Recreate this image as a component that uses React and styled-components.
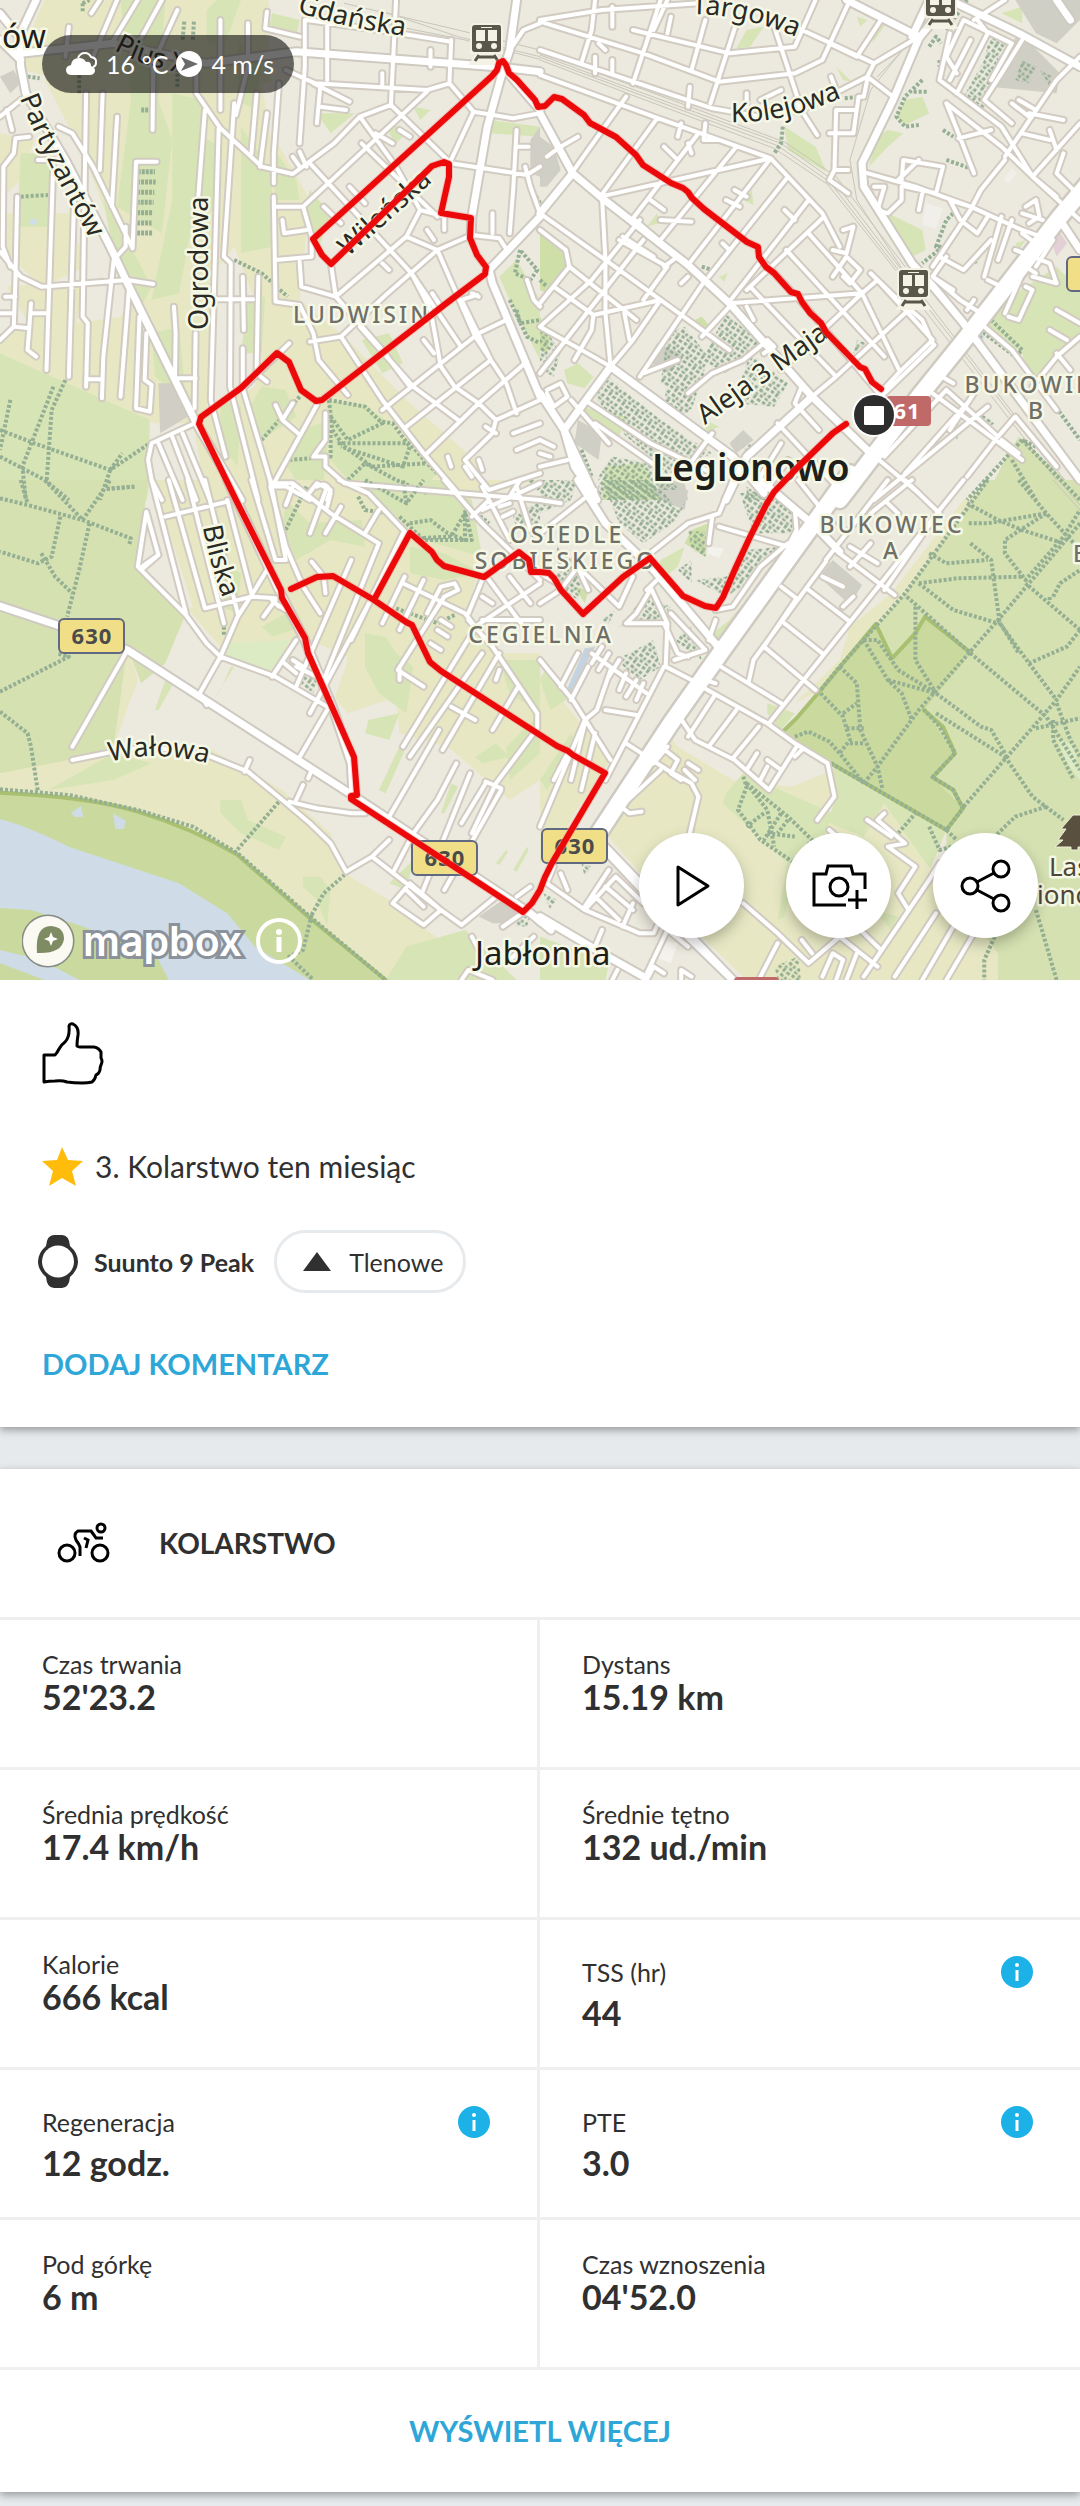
import React from 'react'
import styled, { createGlobalStyle } from 'styled-components'

const colors = {
  text: '#303030',
  link: '#2ea7d8',
  info: '#1cb2e8',
  line: '#efefef',
  page: '#e6eaed',
}

// Map tiles. Every tile keeps its own drawing units, placed by x and y.
const tiles = [
  {
    x: 0,
    y: 0,
    areas: [
      ['#e7e8c3', 'M60 300L250 0H780L790 400L900 600L870 900L1000 1010L1180 1200L1400 1400L1300 1500H600L560 1270L450 1270L0 1060V400Z'],
      ['#ece9de', 'M0 0H250L130 240L250 480L400 900L350 950L0 1000V600L60 540L100 420L0 400ZM620 820L680 740L740 900L760 1080L740 1160L600 1230ZM760 250L900 240L870 420L790 440Z'],
      ['#e7e8c3', 'M130 0H250L150 230L60 210L90 90ZM0 640H200L250 800L120 860L0 740ZM20 860L240 840L220 1000L100 1000Z'],
      ['#d7e4b5', 'M350 0H480L460 300L500 420L470 700L340 620L380 300ZM500 280L590 300L570 600L520 880L440 900L500 600ZM60 460H150V680H50ZM700 380L790 520L790 740L700 760ZM720 890H770L760 1060H700ZM0 1060L435 1260L430 1500H0ZM760 1160L830 1170L860 1250L760 1320L720 1230ZM950 1200L1060 1215L1120 1260L1270 1420L1200 1500H1060L960 1380ZM600 30L630 0H700L650 140L600 130ZM790 40L870 60L860 110L780 90ZM900 570L960 640L920 760L880 640ZM1050 1020L1130 1000L1170 1090L1110 1120ZM1140 370L1180 400L1150 430L1130 400ZM1200 320L1250 330L1220 360ZM920 340L1030 340L960 400ZM440 1000L520 980L540 1200L450 1130ZM870 1290L960 1260L940 1440L880 1480L830 1390ZM1450 830L1500 780L1568 900V1080L1480 900ZM1420 360L1568 380V410L1420 400ZM570 400L640 440L620 640L580 600ZM300 600L380 740L440 860L400 940L330 760ZM690 120L760 180L740 330L690 300ZM640 1200L700 1220L690 1400L640 1330ZM790 440L860 540L870 600L800 600Z'],
      ['#d0cec5', 'M460 1150H505L545 1250L465 1300ZM0 230L40 210L60 250L30 280ZM1568 380L1540 420V520L1568 530Z'],
      ['#cfdfec', 'M85 660L105 655L108 672L90 676Z'],
    ],
    rails: ['M1100 30L1330 110L1568 170', 'M1110 70L1350 120L1568 178', 'M1000 10L1330 90L1568 150'],
    minor: [
      'M155 480L135 1110M215 600L200 1130M250 280L240 950L255 970L250 1160M250 1138H298M298 280L290 510M340 350L325 620',
      'M330 780L300 1070L296 1195M375 860L350 1190M405 950L395 1225L435 1235L440 1155L420 1140L425 1000M445 200L443 390',
      'M505 920L510 1000L508 1135H568M595 330L575 600M568 1000L565 1225M640 60V330M635 385L612 1200L655 1370',
      'M680 310L650 770L670 790L668 1160L750 1500M720 70V200L685 345M745 280L730 460M775 340L755 500M705 830L708 990M750 830L745 1120L775 1145',
      'M620 898H735M705 1045V1165L790 1460M795 590L800 905L870 915L910 1000L925 1080L1010 1185M795 550V460L810 250',
      'M570 220V280L640 385L760 500L850 522L970 430L1045 350L1135 315L1150 0M885 60V200L870 430M775 35L770 85L870 110',
      'M830 210L915 250L1240 270L1305 250L1310 120M890 60L1100 90L1310 125M1305 250L1375 335L1490 355L1568 340M1375 335L1305 490',
      'M1240 275L880 620H795M900 490L1195 820L1335 1035M1050 430L1270 650M1045 350L1150 500L1220 630L1290 650L1290 690M1135 315L1310 490L1530 525L1568 500',
      'M880 620L905 710L905 770L800 780M870 785L875 860L975 890L1180 710L1220 630M962 800L975 890L1110 1050L1190 1160M1180 710L1270 750L1370 705L1450 715L1475 755',
      'M1270 750L1380 1010L1470 1150L1500 1240M900 1025L990 1010L1120 885L1270 750M990 1010L1110 1200L1230 1360L1330 1480M1045 980L1200 1160L1330 1260',
      'M1110 1230L1390 1000L1470 960M1180 1280L1425 1080L1340 900L1385 885M1240 1360L1390 1210L1530 1085M1390 1210L1440 1260L1568 1200M1440 1260L1430 1300L1350 1380L1420 1470L1568 1420M1195 820L1250 930L1280 1100L1320 1160L1390 1210',
      'M910 250L1015 305M930 260L920 370M930 320L1005 330M1110 220V260M850 470L870 500M870 455L890 500M940 620L990 670M1015 560L1060 610M1090 400L1140 430M1160 390L1190 410M950 240V70M1250 150V200M1045 350L1080 400M820 660L825 700L890 690',
      'M170 380L210 400L270 500L385 745L395 485H455M0 755L60 830L120 860L370 840L445 852M85 410L45 415L40 460L10 500L8 740L30 800M50 590L45 830L40 980L85 985L90 910M90 940H140M0 940H40M15 890H45M40 980L0 1020M85 985L80 1050L105 1070',
      'M340 0L270 170M400 0L330 120M470 0L380 170M515 30L440 200M200 80L190 170M290 0L265 40M0 350L60 300M20 330L35 390M110 480H155M330 780L365 740V680',
      'M565 1270L440 1330L430 1380L440 1440L470 1500M460 1330L530 1500M500 1310L570 1500M530 1300L610 1500M800 1215L820 1260L865 1300M820 1260L850 1210M945 1240V1320L910 1370H945V1400L1000 1450L1568 1500M920 1215L790 1460M790 1460H830L900 1500M890 1490L920 1450L960 1470L950 1500',
      'M705 1165L840 1030M1255 880L1280 920M1370 880L1390 890M1230 1020L1260 1060M1500 390L1490 570L1480 700M1500 440H1535M1430 700V640M1480 150L1520 90L1568 70M1410 1280L1440 1300M1300 1370L1310 1400M1350 1400L1370 1430M1390 1380L1400 1410M1490 1300L1568 1270M1500 1350L1568 1320',
      'M1568 640L1540 560L1525 500M1530 840L1550 900L1568 920M1110 790L1130 810M1240 690L1260 720',
    ],
    major: [
      'M105 0L55 110L60 200L75 280L190 480L320 740L370 850L570 1270L700 1500M0 40L55 110M0 120L60 180',
      'M60 160L330 130L600 190L860 155L1440 200L1568 215M1500 0L1480 150L1455 230L1415 380L1385 560L1370 650L1368 710',
      'M1568 650L1420 810L1430 850L1568 1190M1460 200L1568 330',
    ],
    paths: [
      'M0 1290L100 1330L320 1410L435 1330M30 1200L0 1350M155 1160L65 1400L75 1500M190 1140L150 1230L135 1450M320 1410L355 1360M320 1410L290 1500M310 1467L390 1460M0 1370L130 1440L200 1500',
      'M955 1200L965 1290L1000 1340L1080 1400L1240 1390M955 1200L1060 1220L1110 1270L1010 1320L960 1250M980 1330L1190 1330L1240 1390L1270 1420M1110 1265L1140 1270L1190 1340L1170 1400L1080 1370L990 1340M840 1380L960 1370V1290M1010 1440L1060 1390L1150 1440L1240 1480M680 780L760 820L835 890M870 1190L760 1320',
      'M1510 750L1495 820L1540 840L1560 810L1510 750M1480 900L1530 1010L1568 1030M1500 930L1510 970L1568 960M60 590L140 585M240 10L260 0M240 10L240 40M535 65L530 120M563 65L560 120M80 230L115 235M230 280V220M515 260V200M1535 550L1568 610M1540 1440L1568 1470',
    ],
    hedges: 'M400 515H450M398 546H452M398 577H448M397 607H446M398 638H442M398 669H440M398 699H442M410 330H442',
    thickets: '',
  },
  {
    x: 540,
    y: 0,
    areas: [
      ['#d7e4b5', 'M710 380L800 440L832 515L720 450ZM1060 300L1110 290L1130 340L1060 375L1035 350ZM1010 390L1055 400L1010 440L955 500L980 410ZM1010 640L1110 690L1120 750L1080 770L1020 710ZM1310 930L1500 800L1568 870V1000L1420 1150L1400 1060L1290 970ZM600 90L650 80L610 140L570 145ZM860 200L905 245L880 240ZM920 50L950 60L930 80ZM980 60L1005 70L965 130ZM590 600L615 570L620 615ZM310 680L340 640L345 670ZM520 830L545 820L535 845ZM70 1110L110 1090L155 1130L130 1165L80 1150ZM480 1260L520 1280L480 1300ZM1340 40L1400 20L1400 70ZM1380 730L1410 720L1390 750ZM120 1220L250 1250L230 1310L150 1280ZM190 1400L300 1390L350 1500H180Z'],
      ['#cedfa8', 'M0 690L70 750L75 800L20 880L0 870ZM450 960L470 950L490 975L460 990ZM0 950L30 1010L20 1060L0 1050Z'],
      ['#d5e1b1', 'M1390 1310L1568 1480V1500H1290L1350 1380Z'],
      ['#d0cfc5', 'M1390 95L1510 220L1500 280L1310 260L1350 170ZM1380 0H1568V60L1500 130L1440 100ZM0 410L40 440L60 510L20 560L0 560ZM310 1080L340 1030L410 1060L370 1120ZM110 1260L180 1300L170 1380L100 1330ZM550 1330L590 1290L620 1320L570 1360ZM330 1430L420 1450L430 1500H360Z'],
      ['#f1efea', 'M1120 610L1170 625L1150 685L1110 675ZM1345 540L1370 505L1385 520L1360 550Z'],
      ['#e3cfd6', 'M1480 710L1505 690L1530 730L1500 770Z'],
      ['#cfdfec', 'M1262 1010L1285 990L1290 1020L1265 1025Z'],
    ],
    rails: [
      'M0 165L300 280L700 430L850 540L1050 810',
      'M0 172L300 288L690 437L842 547L1040 810',
      'M0 180L290 294L680 445L835 553L1032 810',
      'M1060 140L960 270L900 480L920 600L1060 820L1568 1500',
      'M1110 90L980 230M1120 915L1560 1500M1105 915L1545 1500M0 158L310 272L710 426L860 530L1060 800',
    ],
    minor: [
      'M0 225L330 350L670 475L820 640L870 740M250 290L95 515M340 355L175 590M460 400L270 655M570 440L350 720M670 475L430 795M720 530L490 830M780 600L550 905M820 655L600 870',
      'M670 475L175 590M550 910L935 880L980 840L1140 1020L1045 1115L1000 1165M780 700L935 880L1045 1115M715 750L1000 1070M610 860L860 1130L790 1190M1070 930L860 1130M935 880L700 1110M1145 1035L950 1230M645 780L780 930L1000 1200M550 905L640 1010',
      'M0 65L300 160L520 245L740 220L820 180L900 0M180 30L0 60M350 0L270 250M480 60L440 210M570 70L495 310M680 80L750 300M270 90L550 160L740 140L800 0M0 150L500 325L640 350M160 0L150 90L120 190M330 90L370 0M180 30L460 10',
      'M950 230L1025 290L970 410M950 230L970 190L740 80M640 350L760 330L950 230M1100 110L970 190M840 130L920 170L990 60M950 240L940 290L925 290L910 400L840 400M920 330H860L855 510L840 540L895 580M860 510H895M740 300L805 405',
      'M935 515L1090 560L1250 620L1400 690L1480 720M1180 310L1215 400L1260 520M1190 100L1160 240L1340 380L1430 530L1500 590M1210 280L1300 100L1270 60M1350 480L1280 570L1250 630L1140 800M1400 120L1340 220L1290 300L1370 370M1350 470L1500 240L1568 170M1180 310L1340 440L1430 530L1568 370',
      'M1050 540L1055 480L1170 500L1150 580L1060 560M1040 540L1100 480M970 560L1000 560L980 630L1010 640L1050 600V560M1100 630L1110 580M1210 220L1180 170L1230 60L1370 130L1310 240M1260 60L1350 0M1190 240L1250 120M1215 415L1310 390M1480 390L1500 450M1400 400L1480 420M1420 340L1520 360M1430 530L1568 660M1500 520L1568 590M1520 460L1500 520M1390 300L1440 330M1370 310L1420 350',
      'M0 690L75 750L85 800L280 960M0 640L190 780L350 900L550 1050M350 900L155 945L40 860M300 720L90 1000L0 1120M0 980L155 1070L205 1100M155 945L150 990L100 1080M190 780V940L205 1100M180 590L190 780M550 920L470 1010M350 900L270 1020L205 1100M230 720L370 800L300 900M245 940L260 1020M290 660L150 840L0 980M85 800L0 910M270 655L400 770L360 800M480 840L290 1130M650 1030L590 1080L500 1120L430 1180M130 1200L320 1330L500 1420M160 1270L340 1400M200 1330L90 1200',
      'M320 600L360 630M360 440L400 480M410 370L400 410M480 370L475 420H515M430 430L440 460M540 600L580 620M565 570L600 590M710 630L740 660M350 660L440 665M240 710L330 770M110 410L60 440L20 470M410 850L430 830M380 50L370 100M210 20V80M160 170V220M210 180V220M435 260L430 320M600 280V320M640 300L700 270M845 230L860 270M170 130L190 150M530 730L550 750M620 960L600 920M300 1120L400 1080M500 1300L430 1400M640 1430L700 1330M690 1270L870 1470M650 1480L720 1380M760 1160L740 1210L810 1290',
      'M1250 620L1190 600L1220 660L1270 700M1270 700L1300 650M1160 770L1230 810L1310 720M1140 830L1200 870M1180 770L1140 830L1220 900L1280 940M1350 940L1410 800L1440 820M1360 950L1390 960L1430 870L1410 860M1380 750L1480 790L1500 850L1430 830M1340 650L1290 830M1370 660L1330 780M1410 620L1440 600L1450 650L1420 670M1400 700L1440 730M1460 660L1400 640M1260 900L1240 930M1300 840L1340 860M1490 720L1440 800M1500 930L1568 970M1480 990L1530 1020M1568 1010L1500 1070L1430 1160M1150 1120L1200 1150M1290 980L1370 1050L1500 1230M1500 1060L1540 1110M1180 1170L1330 1310L1240 1430M1260 1180L1190 1290M1140 1180L1400 1380M1330 1310L1380 1250L1500 1400M1340 1320L1390 1360M1300 1220L970 1500M950 1350L1100 1480M1240 1210L1060 1420M1180 1170L1000 1370',
      'M0 1400L80 1380M0 1320L40 1340M0 1360L30 1370M20 1170L60 1150L80 1190L40 1220L20 1180M880 690L910 680L890 760L850 750M850 830L890 770L930 810L900 850L880 830M660 1020L680 1040L650 1060M960 820L1030 890L1110 960L1140 1030',
    ],
    major: [
      'M0 340L95 520L175 590L430 795L550 910L790 1190L950 1350L980 1370M890 0L1100 110M1190 0L1100 115L1025 300L935 490L940 560L1080 790L1150 870L1230 970L1568 1440',
      'M1190 0L1400 105L1568 200M1130 0L1080 110M95 520L0 640M205 1100L70 1290L165 1500M205 1100L560 1370L650 1480M0 1180L70 1290L100 1400L165 1500M790 1190L600 1370L540 1500M1510 660L1568 750M1500 0L1540 60',
    ],
    highway: 'M1600 540L1510 650L1240 1010L1100 1190L870 1500',
    paths: [
      'M1110 240L1060 290L1035 350L1060 380L1100 375M1085 275H1125M885 295L925 290M705 380L700 430L680 460M1180 480L1250 505M1210 630L1180 660L1150 740L1170 740L1110 790M1170 390L1200 410M1130 140L1150 110L1165 130M1100 80H1120M1160 180V200M1310 960L1400 1050L1380 1070L1290 1000L1250 1030M1380 1070L1440 1140L1568 1320M1240 0L1180 90',
      'M1400 1320L1240 1500M1400 1320L1568 1500M1370 1380L1440 1500M1440 1340L1400 1320M470 800L500 810M320 880L350 900M0 840L20 860M120 1350L150 1430',
    ],
    thickets: 'M540 940L640 1030L540 1120L470 1080ZM370 1000L420 980L490 1070L440 1230L350 1150ZM200 1130L350 1260L500 1360L380 1420L250 1310L160 1190ZM610 1060L720 1150L680 1220L560 1210ZM170 1430L210 1370L360 1400L420 1500H170ZM1310 90L1370 130L1290 330L1230 290L1290 180ZM0 960L60 1060L40 1130L0 1110ZM1400 180L1440 200L1420 250L1380 240ZM1450 210L1490 230L1480 260ZM370 1100L480 1120L430 1240L360 1240ZM1250 780L1280 770L1270 800ZM1280 1240L1320 1270L1290 1290ZM1190 1290L1230 1260L1210 1320ZM920 1020L950 1030L910 1060ZM590 1340L620 1330L600 1370ZM600 1460L660 1500H600Z',
  },
  {
    x: 0,
    y: 480,
    areas: [
      ['#e7e8c3', 'M440 0H1568V900L1480 960L1300 800L1160 760L1150 650L1010 700L960 640L1010 530L900 480L860 480L790 590L640 500L540 380ZM0 870L200 840L520 820L600 800L820 930L960 1060L1000 1180L1130 1260L1300 1400L1500 1500H1100L680 1120L400 1000L0 940ZM370 480L400 600L330 800L220 830L340 560Z'],
      ['#ece9de', 'M440 0L480 120L560 380L520 390L400 260L420 80ZM540 400L640 530L960 680L880 480L1010 540L960 690L1030 840L1040 950L580 640L480 550ZM410 610L480 550L1030 950L1130 1250L1010 1180L960 1060L820 930L600 800L400 760ZM1350 60L1568 0V520L1450 520L1350 400L1400 250L1380 200Z'],
      ['#d5e1b1', 'M0 0H430L400 260L540 400L480 550L410 610L370 500L330 800L200 840L0 880Z'],
      ['#d7e4b5', 'M830 60L900 130L1050 120L1060 200L960 180L860 240L820 140ZM1190 200L1290 220L1400 280L1290 300L1190 280ZM1050 0H1300L1370 60L1400 230L1230 180L1120 80ZM640 630L670 560L680 560L620 660ZM460 690L510 600L480 600L450 690ZM620 240L700 280L690 400L640 380ZM1060 460L1120 470L1150 520L1200 560L1180 700L1100 640L1060 560ZM1070 720L1160 700L1130 780L1060 760ZM1470 800L1568 700V820L1480 900ZM1100 930L1160 800L1180 800L1120 940ZM640 960L700 960L720 1020L830 1070L810 1110L700 1060L640 1000ZM880 1190L930 1190L960 1230L950 1340L920 1260L880 1220ZM140 930L330 820L440 850L330 900ZM1450 540L1568 540V700L1480 640ZM1280 1000L1310 910L1330 920L1290 1000ZM1380 830L1440 790L1480 830L1400 850ZM1180 1400L1350 1350L1500 1500H1120ZM1130 1210L1200 1140L1180 1230ZM760 440L830 400L850 450L790 470ZM1440 1150L1470 1110L1475 1115L1450 1155ZM1490 1170L1530 1100L1535 1110L1500 1175Z'],
      ['#dcebc4', 'M660 490L840 480L800 590L640 530Z'],
      ['#cad99d', 'M0 940Q260 950 400 990Q560 1040 690 1120L900 1310L1120 1500H0Z'],
      ['#cfdbe6', 'M0 1018Q60 1030 200 1100L520 1210L660 1300L740 1400L900 1500H490L440 1400L340 1380L240 1340L90 1290L0 1284ZM205 1000L235 978L242 1010L220 1012ZM328 1000L365 1022L360 1046L335 1048ZM0 1410L120 1440L230 1500H130L0 1450Z'],
      ['#d0cec5', 'M1390 1310L1460 1260L1510 1290L1480 1330L1430 1330Z'],
    ],
    rails: [],
    minor: [
      'M210 840L330 815L430 800L600 825L720 875L820 960L900 1030L960 1090L1005 1175L1080 1130L1280 1290L1340 1335L1440 1250M840 965L920 985L1020 1000L1060 1000M365 520L210 800M725 840L710 875M880 915L860 960M905 870L895 895M1080 1130L1130 1080',
      'M400 260L425 95L460 225L405 265L540 405L600 490L640 530L800 590L950 680M410 270L460 225M640 530L580 640L600 675M640 530L690 410L740 330L775 270M950 690L865 840M440 0L540 400M480 110L660 65M490 0L595 385L730 350L800 355M545 0L650 430M595 0L690 400M660 60L730 340',
      'M730 0L800 240H830L785 0M785 20L830 200L880 320L930 400M860 480L790 590M1020 240L860 620M1170 160L1020 480M1100 190L940 600L860 560M1180 160L900 700M785 10H850L960 100L1100 190M850 20L830 75M950 20L900 160M920 20Q950 0 960 40L950 80M990 80L945 160M1100 90L1060 160M905 245L940 290L945 340',
      'M985 0L1070 40L1180 160M1290 0L1400 130L1500 230L1568 300M1370 460L1170 800M1400 520L1190 830M1450 520L1285 810M1360 420L1430 500L1560 700V745L1440 910M1275 750L1130 1010M1325 850L1270 960L1200 1060L1145 1170M1365 880L1225 1240M1410 910L1340 1030M1455 930L1290 1230M1410 905L1455 925M1440 910L1370 1060',
      'M1505 620L1430 750M1310 680L1380 720M1175 290L1110 430M1230 300L1160 450M1170 310L1350 400L1380 440L1568 310M1230 620L1155 570L1290 350L1330 330L1320 310L1280 320L1240 400M1400 300L1360 400M1400 350L1430 370M1420 300L1520 440M1480 290L1540 370M1140 1270L1190 1210L1280 1290L1230 1335L1140 1270M1180 1230L1230 1280M1280 420L1310 440M1270 450L1300 470M1250 490L1280 510M1450 570L1440 600M1400 90L1568 10M1400 20L1480 180M1450 80L1480 70M1460 110L1490 95M1400 420L1568 420M1500 20L1540 150',
      'M1510 0L1480 50M1370 110L1420 60M1160 600V560M1340 1500L1360 1470L1430 1500M1370 1370L1390 1410M1460 1340L1530 1290L1568 1330M800 360L765 410M800 370L830 390M790 360L810 380M1500 1250L1540 1220M1550 1370L1480 1440M820 545L860 580M850 540L880 560M810 560L790 590',
    ],
    major: [
      'M0 378L165 435L370 510L580 650L1030 950L1540 1300L1600 1350',
      'M660 0L810 330L885 480L965 680L1020 850L1025 945',
    ],
    paths: [
      'M0 55L80 75L240 120L380 175L375 195M60 0L80 70M130 0L240 120L320 0M310 27L390 20M260 130L230 270L195 410M175 110L150 230L110 250L0 215M120 220L160 290L210 340M0 635L200 530L165 520M0 695L80 760L90 800L110 935M680 1120L810 965M905 1305L940 1240L1000 1185M905 1305L880 1410L840 1430L910 1500M1150 385L1270 430L1320 405M650 440V470',
      'M0 928L200 945L400 990L560 1040L690 1120L900 1310L1120 1500M1060 0L1180 70L1230 0M1180 70L1170 0M1190 130L1250 120L1300 160L1350 180V100L1310 170L1200 175M1040 50L1060 90L1130 100M1370 90L1420 130M890 20L820 170M1160 110L1230 180L1370 180L1350 90',
    ],
    border: 'M0 938Q260 950 400 995Q560 1045 690 1125L900 1315L1120 1500',
    thickets: 'M880 560L920 600L910 640L870 610ZM1490 110L1568 60V180L1500 150ZM1490 1310L1540 1310L1530 1340L1500 1340Z',
  },
  {
    x: 540,
    y: 480,
    areas: [
      ['#d7e4b5', 'M550 420L700 240L600 420L520 490L490 470ZM660 670L740 700L700 750L660 700ZM350 240L420 200L400 260L340 310ZM850 850L1180 1050L1120 1200L920 1060L830 1040L860 950Z'],
      ['#e7e8c3', 'M0 580L205 840L100 1000L50 1100L0 1150ZM370 760L400 800L560 900L730 920L850 870L860 960L820 1020L940 1070L1000 970L1120 1150L1180 1210L1330 1420V1500H600L350 1250L190 1060L250 930L300 880ZM1230 60L1330 0L1060 340L815 630L740 670L870 540L900 440L1020 340Z'],
      ['#d7e4b5', 'M590 880L850 1000L800 1150L720 1150L530 970L540 940ZM0 600L20 560L90 650L30 690ZM690 1320L720 1140L740 1160L710 1310ZM0 1370L200 1450L190 1500H0ZM970 1290L1040 1310L1020 1350ZM0 900L90 760L110 790L20 930Z'],
      ['#d5e1b1', 'M1300 0H1568V1500H1330V1420L1180 1210L1180 1050L815 630L1060 340Z'],
      ['#cad99d', 'M975 432L1022 535L1118 410L1250 518L1115 690L1205 820L1140 892L1228 985L1180 1050L845 850L705 755L815 630Z'],
      ['#cedfa8', 'M440 150L490 130L480 230L420 190ZM100 320L140 330L130 370Z'],
      ['#d0cfc5', 'M810 290L850 240L935 315L900 375ZM330 30L430 30L420 90L350 60Z'],
      ['#c4d3df', 'M130 505L160 500L90 640L75 635Z'],
      ['#f4f2ed', 'M490 200L535 205L520 235L485 220ZM340 1380L400 1390L380 1450L330 1430Z'],
      ['#dcebc4', 'M1500 770L1550 800L1568 880V900L1530 850Z'],
    ],
    rails: ['M1490 0L1568 90', 'M1505 0L1568 75'],
    minor: [
      'M1230 0L990 310L665 730M1060 0L1160 100M960 100L1080 0M830 240L1010 0M830 245L620 540L605 610M700 320L745 355L650 500L800 630M780 330L900 425M710 430L820 520M525 560L700 670M470 620L660 730L740 790L835 850L855 950L805 1020',
      'M405 710L450 780L565 840L665 930L745 800M505 650L430 770M570 690L490 800M635 740L560 835M250 790L370 870L440 910L460 950L435 1060M350 870L235 980L260 1000L295 995M870 220L1030 345M1160 90L1000 330M900 260L960 190M900 200L980 250M820 290L880 320M880 380L910 350',
      'M0 540L95 660L205 840M205 570L165 690L130 720L0 1040M360 560L190 900M365 560L440 600M320 320L370 430L365 560M500 110L490 190M560 0L520 100L430 130L320 220M520 140L720 200L745 150L740 90M510 390L560 380L640 260L720 190M190 690L280 705M130 730L90 900M160 760L120 930M0 370L60 330L110 260M0 280L50 310M250 430L360 430L400 520L430 530M320 330L280 400L250 430M110 260L230 380L270 290L250 270',
      'M150 520L310 640M180 500L150 550M200 520L170 570M230 540L200 590M250 580L230 630M280 600L250 650M300 610L280 660M110 520L60 620M140 560L90 660M390 540L480 510L380 400M350 800L400 840L380 880L410 900M370 800L330 850M430 850L460 870M420 870L450 900M600 870L630 820M640 900L660 860M660 840L700 870M740 830L760 810M1010 70L1040 100M160 30L0 160M0 60L60 70M140 330L100 240M350 290L310 330M520 490L490 480L510 420',
      'M20 1210L130 1290L290 1360H330L360 1290M130 1290L220 1190L300 1270M160 1250L230 1320M190 1220L270 1290M200 1170L130 1280M270 1270L240 1340M60 1180L80 1230M40 1160L20 1210M310 1480L370 1350L430 1400M180 1350L160 1400M590 1270L690 1360L780 1450L870 1370L980 1460M940 1490L1130 1200L1160 1150M1000 1000L980 1020L1060 1090L1010 1100L1090 1160L1040 1240L1070 1290M1150 1300L1030 1490M1200 1340L1110 1500M1260 1360L1180 1500',
      'M930 1350L990 1410M760 1380L790 1420M690 1390L640 1490M820 1490L850 1420L880 1440L860 1500M920 1420L890 1500M310 1500L330 1460L360 1480M410 1500V1470L440 1490M225 1470L210 1500M950 1020L1020 1070M840 1050L990 1180L960 1240M80 820L40 900M480 600L510 610M750 0L850 130',
    ],
    major: [
      'M110 0L190 130L330 270L525 510M640 0L800 140L870 215M0 1310L180 1420L300 1490M170 1080L560 1500',
      'M180 1100L390 1330L560 1500',
    ],
    highway: 'M900 -20L530 510L380 730L170 1060',
    paths: [
      'M1300 0L1060 340L870 560L815 630M1240 70L1330 120L1400 150L1520 190M1390 0L1470 100L1568 210M1470 100L1350 180V220L1410 300L1520 170L1568 90M1130 220L1180 250L1300 240M1100 310L1210 295L1400 290M1100 310L1200 390L1330 430M1250 190L1310 240L1335 430L1420 550L1500 660M1245 130H1300L1470 100',
      'M1568 130L1420 310L1330 420L1100 690L980 860L940 910M1065 350L1250 520L1470 710L1568 870M1090 380V540L1150 640M1568 450L1410 310M1568 450L1530 500L1420 550M940 480L1010 600L1050 640L1080 720M940 480H980L1040 570L1150 640L1280 740L1310 750L1350 820M1010 600L1150 640M1150 700L1350 830M870 560L920 610L930 750L980 860L995 930M815 640L880 710L900 780L870 820M880 700L920 670M890 745H940M900 790H940M740 770L780 755L840 785L870 820L940 910',
      'M845 850L1180 1050L1228 985L1200 930L1140 892L1205 820L1160 740L1115 690M1230 980L1500 660L1568 560M1350 830L1430 950L1520 1020M1470 980L1380 1010L1320 1070M1130 1040L1160 1110L1270 1080M1490 720V780L1550 900M1440 745L1568 715M1440 1290L1500 1500M1320 1370L1290 1440V1500M1040 1060L1090 1000M1180 1050L1210 1080M1500 670L1540 780L1568 830M1490 350L1510 310L1568 270M1480 360V350M1330 420L1390 520',
      'M590 890L600 920L575 990L640 1080L740 1150M600 910L720 1010L790 1080L740 1140M600 910L660 990L680 1100M650 1000L600 1040M700 1000L650 1080M660 1060L740 1070M720 1020L690 1060',
    ],
    border: 'M705 755L745 715L815 630L975 432L1022 535L1090 460L1118 410L1250 518M1115 690L1170 740L1205 820L1140 892L1200 930L1228 985L1180 1050L845 850',
    thickets: 'M180 0H330L400 90L420 70L400 120L300 190L230 130ZM430 150L490 160L480 230L440 210ZM580 40L680 30L740 100L730 160L620 160ZM600 210L700 200L600 310L540 350L450 300L540 290ZM220 540L330 480L350 560L290 600ZM230 440L300 350L380 380L340 430ZM390 480L440 440L470 540ZM50 200L130 280L110 360L50 320ZM0 0H110L90 60L0 100ZM400 270L440 240V310ZM180 420L220 390L200 430ZM680 1460L750 1430L760 1500H690ZM120 1150L150 1160L130 1190ZM10 1240L50 1260L30 1290Z',
  },
]

const route =
  'M881 389L872 382L865 369L860 367L826 332L821 323L810 313L802 302L798 294L791 292L774 273L766 267L759 257L758 247L747 242L704 209L692 198L688 192L683 188L671 183L643 165L636 155L616 137L590 123L584 115L562 99L554 97L545 106L538 107L535 100L517 80L509 73L506 65L503 61L499 63L497 70L492 76L313 239L322 255L331 264L432 166L444 162L449 164V177L441 213L471 218L470 238L477 255L486 267L485 274L448 302L322 400L316 401L301 390L298 383L289 362L277 353L241 388L201 417L199 424L236 500L281 590L282 598L305 638L308 653L332 707L354 757L357 795L351 796V799L523 912L532 903L540 890L545 877L552 863L605 773L573 755L568 751L557 746L540 735L441 671L430 662L412 625L406 622L374 600L333 576L317 577L291 589M375 598L410 533L432 552L437 560L444 566L484 577L519 552L529 560L531 572H540L549 573L554 578L561 590L583 614L623 577L650 558L683 596L705 606L716 608L723 597L736 567L750 537L766 505L774 492L798 467L833 433L846 424'

const streets = [
  { name: 'Gdańska', d: 'M297 12Q348 29 414 37' },
  { name: 'Targowa', d: 'M692 14Q745 14 808 42' },
  { name: 'Kolejowa', d: 'M731 122Q788 124 854 92' },
  { name: 'Partyzantów', d: 'M20 98Q42 157 110 274' },
  { name: 'Pius XI', d: 'M114 50Q160 76 230 76' },
  { name: 'Ogrodowa', d: 'M208 330V180' },
  { name: 'Wileńska', d: 'M348 257L450 166' },
  { name: 'Aleja 3 Maja', d: 'M705 425L860 315' },
  { name: 'Bliska', d: 'M203 527Q210 568 230 616' },
  { name: 'Wałowa', d: 'M110 762Q160 748 220 767' },
]

const districts = [
  { name: 'LUDWISIN', x: 362, y: 323 },
  { name: 'BUKOWIEC', x: 1037, y: 393 },
  { name: 'B', x: 1037, y: 419 },
  { name: 'OSIEDLE', x: 567, y: 543 },
  { name: 'SOBIESKIEGO', x: 566, y: 569 },
  { name: 'CEGIELNIA', x: 541, y: 643 },
  { name: 'BUKOWIEC', x: 892, y: 533 },
  { name: 'A', x: 892, y: 559 },
  { name: 'B', x: 1082, y: 562 },
]

const towns = [
  { name: 'ów', x: 2, y: 48, size: 32 },
  { name: 'Jabłonna', x: 475, y: 965, size: 33 },
]

const shields = [
  { x: 58, y: 618 },
  { x: 411, y: 840 },
  { x: 541, y: 828 },
  { x: 1066, y: 256 },
]

const stations = [
  { x: 472, y: 25 },
  { x: 926, y: -11 },
  { x: 899, y: 270 },
]

const stats = [
  { label: 'Czas trwania', value: "52'23.2" },
  { label: 'Dystans', value: '15.19 km' },
  { label: 'Średnia prędkość', value: '17.4 km/h' },
  { label: 'Średnie tętno', value: '132 ud./min' },
  { label: 'Kalorie', value: '666 kcal' },
  { label: 'TSS (hr)', value: '44', info: true },
  { label: 'Regeneracja', value: '12 godz.', info: true },
  { label: 'PTE', value: '3.0', info: true },
  { label: 'Pod górkę', value: '6 m' },
  { label: 'Czas wznoszenia', value: "04'52.0" },
]

const Tile = ({ tile, children }) => (
  <g transform={`translate(${tile.x} ${tile.y}) scale(0.3444 0.3333)`}>{children}</g>
)

const joined = (list) => list.join('')

function RouteMap() {
  return (
    <MapCanvas viewBox="0 0 1080 980" role="img" aria-label="Mapa trasy">
      <defs>
        <pattern id="thicket" width="48" height="42" patternUnits="userSpaceOnUse" patternTransform="rotate(38)">
          <path d="M2 3h11v9h-9zM19 1h9v12h-8zM34 5h11v8h-12zM5 19h9v10h-10zM22 18l11 2v9h-11zM38 21h8v9h-8zM1 33h12v7h-10zM18 35h9v6h-9zM32 33h11v8h-9z" fill="#94af93" />
        </pattern>
      </defs>
      <rect width="1080" height="980" fill="#ece9de" />
      {tiles.map((tile, i) => (
        <Tile tile={tile} key={i}>
          {tile.areas.map(([fill, d], n) => <path key={n} d={d} fill={fill} />)}
          <path d={tile.thickets} fill="url(#thicket)" />
          {tile.border && <Line d={tile.border} $color="#a8c070" $width={4} />}
          {tile.rails.map((d) => <Line key={d} d={d} $color="#c8c5bb" $width={1} />)}
        </Tile>
      ))}
      {tiles.map((tile, i) => (
        <Tile tile={tile} key={i}>
          <Line d={joined(tile.paths)} $color="#94af93" $width={4} $dash="3 2" />
          {tile.hedges && <Line d={tile.hedges} $color="#94af93" $width={5} $dash="3 1" />}
          <Line d={joined(tile.minor)} $color="#d2cbc2" $width={8} />
          <Line d={joined(tile.major)} $color="#cfcac1" $width={11} />
          {tile.highway && <Line d={tile.highway} $color="#cfcac1" $width={21} />}
        </Tile>
      ))}
      {tiles.map((tile, i) => (
        <Tile tile={tile} key={i}>
          <Line d={joined(tile.minor)} $color="#fff" $width={4} />
          <Line d={joined(tile.major)} $color="#fff" $width={7} />
          {tile.highway && <Line d={tile.highway} $color="#fff" $width={16} />}
        </Tile>
      ))}

      {stations.map(({ x, y }) => (
        <g key={x} transform={`translate(${x} ${y})`}>
          <path d="M3 0H27Q29 0 29 3V27H0V3Q0 0 3 0ZM5 31H24L29 38H0Z" fill="#f4f2e4" stroke="#f4f2e4" strokeWidth="4" />
          <path d="M3 0H27Q29 0 29 3V24Q29 27 26 27H3Q0 27 0 24V3Q0 0 3 0Z" fill="#59574a" />
          <path d="M4 5H13V16H4ZM16 5H25V16H16ZM9 2H20V3H9Z" fill="#f4f2e4" />
          <circle cx="7" cy="21" r="3" fill="#f4f2e4" />
          <circle cx="22" cy="21" r="3" fill="#f4f2e4" />
          <path d="M7 30L3 36M22 30L26 36M6 32H23" stroke="#59574a" strokeWidth="3" fill="none" />
        </g>
      ))}

      {streets.map(({ name, d }, i) => (
        <g key={name}>
          <path id={`street-${i}`} d={d} fill="none" />
          <StreetName><textPath href={`#street-${i}`}>{name}</textPath></StreetName>
        </g>
      ))}
      {districts.map(({ name, x, y }) => <DistrictName key={`${x}-${y}`} x={x} y={y}>{name}</DistrictName>)}
      {towns.map(({ name, x, y, size }) => <TownName key={name} x={x} y={y} fontSize={size}>{name}</TownName>)}
      <CityName x="652" y="481">Legionowo</CityName>
      <ParkName x="1049" y="876">Las</ParkName>
      <ParkName x="1037" y="904">iono</ParkName>
      <path d="M1073 815L1061 829H1066L1058 840H1063L1055 847H1071V850H1078V847H1090V815Z" fill="#59503f" stroke="#eef0d8" strokeWidth="1" />

      {shields.map(({ x, y }) => (
        <g key={x}>
          <rect x={x + 1} y={y + 1} width="65" height="34" rx="5" fill="#f1df87" stroke="#606981" strokeWidth="2" />
          <ShieldText x={x + 34} y={y + 26} fill="#4b4b4b">630</ShieldText>
        </g>
      ))}
      <rect x="886" y="396" width="45" height="30" rx="4" fill="#c06969" />
      <ShieldText x="907" y="419" fill="#fff">61</ShieldText>
      <rect x="734" y="977" width="45" height="30" rx="4" fill="#c06969" />

      <path d={route} fill="none" stroke="#f3a09a" strokeWidth="8" strokeLinejoin="round" strokeLinecap="round" opacity="0.5" />
      <path d={route} fill="none" stroke="#ec0909" strokeWidth="6" strokeLinejoin="round" strokeLinecap="round" />
      <circle cx="874" cy="415" r="22" fill="#fff" />
      <circle cx="874" cy="415" r="20" fill="#2d2d2d" />
      <rect x="864" y="406" width="20" height="19" rx="1" fill="#fff" />
    </MapCanvas>
  )
}

const CloudIcon = () => (
  <svg width="32" height="24" viewBox="0 0 32 24">
    <path d="M12 6Q14 1 19 1Q23 1 25 5Q31 6 30 11Q30 14 27 15" fill="none" stroke="#fff" strokeWidth="2" />
    <path d="M6 23Q0 23 0 18Q0 14 5 13Q6 6 13 6Q18 6 20 10Q25 9 25 14Q29 15 29 19Q28 23 24 23Z" fill="#fff" />
  </svg>
)

const WindIcon = () => (
  <svg width="27" height="27" viewBox="0 0 27 27">
    <circle cx="13" cy="13" r="13" fill="#fff" />
    <path d="M5 6L22 13L5 20L9 13Z" fill="#6a6a6a" />
  </svg>
)

const PlayIcon = () => (
  <svg width="56" height="56" viewBox="0 0 56 56" fill="none" stroke="#000" strokeWidth="3">
    <path d="M14 9L44 28L14 47Z" strokeLinejoin="round" />
  </svg>
)

const CameraIcon = () => (
  <svg width="56" height="56" viewBox="0 0 56 56" fill="none" stroke="#000" strokeWidth="3">
    <path d="M35 47H3V16H15L17 8H40L42 16H54V31" />
    <circle cx="28" cy="29" r="9" />
    <path d="M46 32V51M37 42H56" />
  </svg>
)

const ShareIcon = () => (
  <svg width="56" height="56" viewBox="0 0 56 56" fill="none" stroke="#000" strokeWidth="3">
    <circle cx="12" cy="28" r="8" />
    <circle cx="43" cy="11" r="8" />
    <circle cx="43" cy="45" r="8" />
    <path d="M19 24L36 15M19 32L36 41" />
  </svg>
)

const ThumbIcon = () => (
  <svg width="62" height="63" viewBox="0 0 62 63" fill="none" stroke="#000" strokeWidth="3" strokeLinejoin="round">
    <path d="M2 33H13Q15 31 17 27Q20 22 23 20Q28 15 27 4Q28 1 31 2Q37 5 36 13Q35 19 35 24Q36 25 38 25H52Q57 26 59 30Q59 33 59 36Q61 39 59 43Q58 45 58 48Q57 52 54 53Q53 58 50 60Q46 61 40 61Q32 61 25 60Q20 58 13 59Q7 59 2 60Z" />
  </svg>
)

const StarIcon = () => (
  <svg width="41" height="39" viewBox="0 0 41 39">
    <path d="M20 0L26 13L41 14L30 24L34 39L20 31L7 39L11 24L0 14L15 13Z" fill="#ffbc0a" />
  </svg>
)

const WatchIcon = () => (
  <svg width="40" height="53" viewBox="0 0 40 53">
    <path d="M8 11Q9 0 16 0H24Q31 0 32 11Q40 18 40 26.500Q40 35 32 42Q31 53 24 53H16Q9 53 8 42Q0 35 0 26.500Q0 18 8 11Z" fill="#303030" />
    <circle cx="20" cy="26.500" r="16" fill="#fff" />
  </svg>
)

const CyclingIcon = () => (
  <svg width="54" height="42" viewBox="0 0 54 42" fill="none" stroke="#000" strokeWidth="3">
    <circle cx="10" cy="31" r="8" />
    <circle cx="43" cy="31" r="8" />
    <circle cx="44" cy="6" r="4" />
    <path d="M23 34V25Q22 22 19 18Q16 12 21 9H34Q37 13 39 16H46" />
    <path d="M27 16L31 18L29 26" />
  </svg>
)

const InfoIcon = () => (
  <svg width="32" height="32" viewBox="0 0 32 32">
    <circle cx="16" cy="16" r="16" fill={colors.info} />
    <circle cx="16" cy="9" r="2" fill="#fff" />
    <path d="M16 14V25" stroke="#fff" strokeWidth="3" />
  </svg>
)

function Stat({ label, value, info }) {
  return (
    <Cell>
      <CellHead $tall={info}>
        <dt>{label}</dt>
        {info && <IconButton type="button" aria-label={`Informacje: ${label}`}><InfoIcon /></IconButton>}
      </CellHead>
      <Value>{value}</Value>
    </Cell>
  )
}

function App() {
  return (
    <Page>
      <GlobalStyle />
      <Card>
        <MapArea>
          <RouteMap />
          <Weather>
            <CloudIcon /><span>16 °C</span>
            <WindIcon /><span>4 m/s</span>
          </Weather>
          <Attribution>
            <MapboxLink href="#mapbox">
              <svg width="53" height="54" viewBox="0 0 53 54">
                <circle cx="26" cy="27" r="25" fill="#fafaf3" stroke="#868c84" strokeWidth="3" />
                <path d="M15 39Q13 12 29 12Q42 13 42 25Q40 40 15 39Z" fill="#7f8b62" />
                <path d="M29 18L31 23L36 25L31 27L29 32L27 27L22 25L27 23Z" fill="#fff" />
              </svg>
              mapbox
            </MapboxLink>
            <IconButton type="button" aria-label="Informacje o mapie">
              <svg width="46" height="46" viewBox="0 0 46 46">
                <circle cx="23" cy="23" r="21" fill="none" stroke="#fff" strokeWidth="4" />
                <path d="M23 19V34" stroke="#fff" strokeWidth="5" />
                <circle cx="23" cy="14" r="3" fill="#fff" />
              </svg>
            </IconButton>
          </Attribution>
          <MapActions>
            <RoundButton type="button" aria-label="Odtwórz"><PlayIcon /></RoundButton>
            <RoundButton type="button" aria-label="Dodaj zdjęcie"><CameraIcon /></RoundButton>
            <RoundButton type="button" aria-label="Udostępnij"><ShareIcon /></RoundButton>
          </MapActions>
        </MapArea>
        <Summary>
          <LikeButton type="button" aria-label="Lubię to"><ThumbIcon /></LikeButton>
          <Achievement><StarIcon />3. Kolarstwo ten miesiąc</Achievement>
          <Device>
            <WatchIcon />
            <strong>Suunto 9 Peak</strong>
            <Tag>
              <svg width="28" height="19" viewBox="0 0 28 19"><path d="M14 0L28 19H0Z" fill="#303030" /></svg>
              Tlenowe
            </Tag>
          </Device>
          <TextButton type="button">DODAJ KOMENTARZ</TextButton>
        </Summary>
      </Card>
      <Card>
        <SportHeader><CyclingIcon /><h2>KOLARSTWO</h2></SportHeader>
        <Stats>
          {stats.map((stat) => <Stat key={stat.label} {...stat} />)}
        </Stats>
        <Footer><TextButton type="button">WYŚWIETL WIĘCEJ</TextButton></Footer>
      </Card>
    </Page>
  )
}

const GlobalStyle = createGlobalStyle`
  * { box-sizing: border-box; }
  body {
    margin: 0;
    background: ${colors.page};
    color: ${colors.text};
    font-family: Lato, "Open Sans", sans-serif;
  }
  button {
    padding: 0;
    border: 0;
    background: none;
    font: inherit;
    cursor: pointer;
  }
  svg { display: block; flex: none; }
`

const Page = styled.main`
  display: flex;
  flex-direction: column;
  gap: 42px;
  padding-bottom: 13px;
`

const Card = styled.section`
  background: #fff;
  box-shadow: 0 3px 8px rgba(0, 0, 0, 0.35);
`

const MapArea = styled.div`
  position: relative;
  overflow: hidden;
`

const MapCanvas = styled.svg`
  width: 100%;
  height: auto;
  font-family: "Noto Sans", "Open Sans", sans-serif;
`

const Line = styled.path`
  fill: none;
  stroke: ${(props) => props.$color};
  stroke-width: ${(props) => props.$width}px;
  stroke-dasharray: ${(props) => props.$dash || 'none'};
  stroke-linejoin: round;
  stroke-linecap: ${(props) => (props.$dash ? 'butt' : 'round')};
  vector-effect: non-scaling-stroke;
`

const MapText = styled.text`
  paint-order: stroke;
  stroke: #f6f8e6;
  stroke-width: 5px;
  stroke-linejoin: round;
  fill: #2a2a24;
`

const StreetName = styled(MapText)`
  font-size: 27px;
`

const DistrictName = styled(MapText)`
  font-size: 23px;
  font-weight: 500;
  letter-spacing: 3px;
  text-anchor: middle;
  fill: #6f6f68;
`

const TownName = styled(MapText)`
  fill: #1f1f1a;
`

const CityName = styled(MapText)`
  font-size: 37px;
  font-weight: 600;
  fill: #1f1f1a;
`

const ParkName = styled(MapText)`
  font-size: 26px;
  fill: #4e4638;
`

const ShieldText = styled.text`
  font-size: 22px;
  font-weight: 700;
  letter-spacing: 1px;
  text-anchor: middle;
`

const Weather = styled.div`
  position: absolute;
  top: 35px;
  left: 42px;
  display: flex;
  align-items: center;
  gap: 8px;
  height: 58px;
  padding: 0 20px 0 24px;
  border-radius: 29px;
  background: rgba(20, 20, 20, 0.62);
  color: #fff;
  font-size: 25px;
`

const Attribution = styled.div`
  position: absolute;
  left: 22px;
  bottom: 12px;
  display: flex;
  align-items: center;
  gap: 14px;
`

const MapboxLink = styled.a`
  display: flex;
  align-items: center;
  gap: 8px;
  height: 54px;
  color: #fff;
  font-family: Inter, sans-serif;
  font-size: 41px;
  font-weight: 600;
  line-height: 48px;
  text-decoration: none;
  -webkit-text-stroke: 6px #8b929b;
  paint-order: stroke fill;
`

const MapActions = styled.div`
  position: absolute;
  right: 42px;
  bottom: 42px;
  display: flex;
  gap: 42px;
`

const RoundButton = styled.button`
  display: grid;
  place-items: center;
  width: 105px;
  height: 105px;
  border-radius: 50%;
  background: #fff;
  box-shadow: 0 6px 14px rgba(0, 0, 0, 0.25);
`

const IconButton = styled.button`
  border-radius: 50%;
`

const Summary = styled.div`
  display: flex;
  flex-direction: column;
  align-items: flex-start;
  padding: 42px 42px 35px;
`

const LikeButton = styled.button`
  margin-bottom: 61px;
`

const Achievement = styled.p`
  display: flex;
  align-items: center;
  gap: 12px;
  margin: 0 0 44px;
  font-size: 30px;
  line-height: 40px;
`

const Device = styled.div`
  display: flex;
  align-items: center;
  gap: 16px;
  margin: 0 0 43px -4px;
  font-size: 25px;
`

const Tag = styled.span`
  display: flex;
  align-items: center;
  gap: 18px;
  height: 63px;
  margin-left: 4px;
  padding: 0 20px 0 26px;
  border: 3px solid #e7eaed;
  border-radius: 32px;
`

const TextButton = styled.button`
  color: ${colors.link};
  font-size: 29px;
  font-weight: 700;
  line-height: 56px;
`

const SportHeader = styled.header`
  display: flex;
  align-items: center;
  gap: 48px;
  height: 148px;
  padding: 0 57px;

  h2 {
    margin: 0;
    font-size: 28px;
  }
`

const Stats = styled.dl`
  display: grid;
  grid-template-columns: 1fr 1fr;
  margin: 0;
  border-bottom: 3px solid ${colors.line};
`

const Cell = styled.div`
  height: 150px;
  padding: 30px 47px 0 42px;
  border-top: 3px solid ${colors.line};

  &:nth-child(odd) {
    border-right: 3px solid ${colors.line};
  }
`

const CellHead = styled.div`
  display: flex;
  align-items: center;
  justify-content: space-between;
  height: ${(props) => (props.$tall ? '44px' : '28px')};
  font-size: 25px;
  line-height: 28px;
`

const Value = styled.dd`
  margin: 0;
  font-size: 34px;
  font-weight: 700;
  line-height: 38px;
`

const Footer = styled.footer`
  display: flex;
  justify-content: center;
  padding: 33px 42px;
`

export default App
